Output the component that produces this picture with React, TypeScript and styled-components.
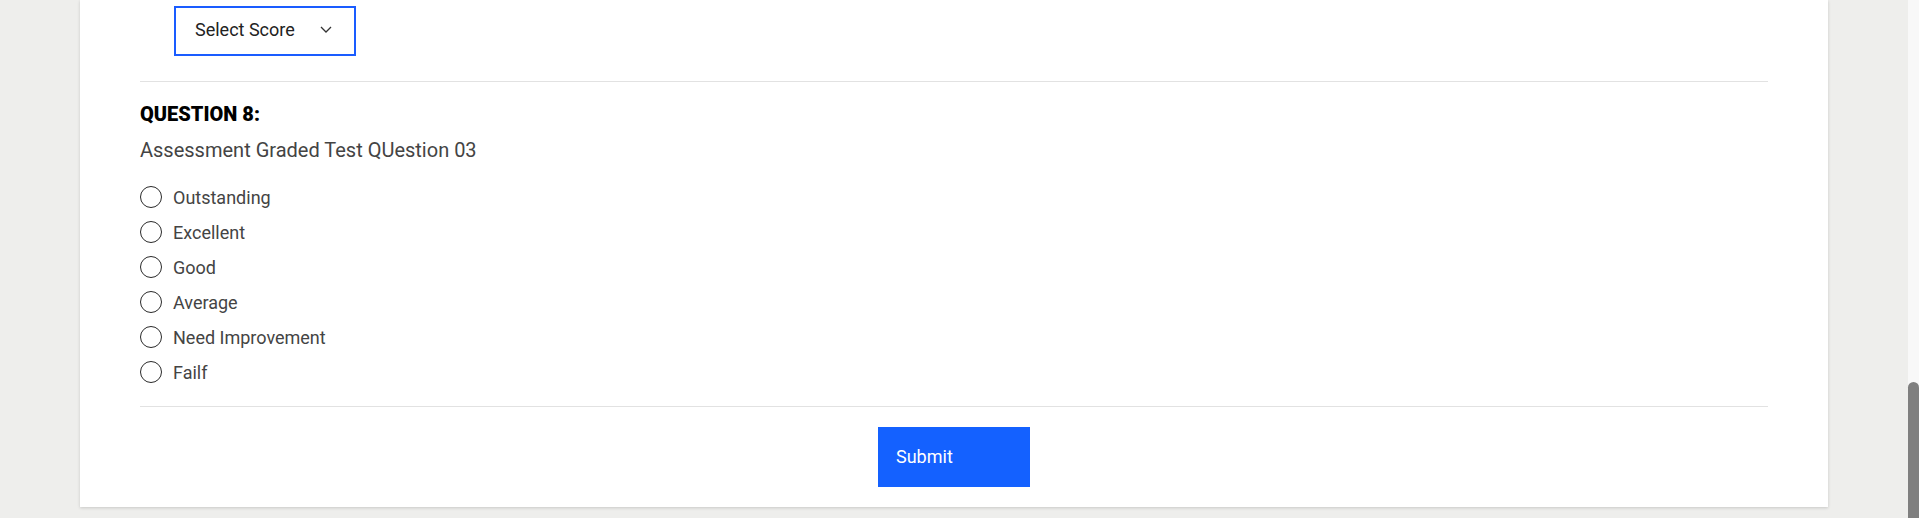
import React from 'react'
import styled, { createGlobalStyle } from 'styled-components'

const GlobalStyle = createGlobalStyle`
  html, body {
    margin: 0;
    padding: 0;
    height: 100%;
    overflow: hidden;
    background: #eeeeec;
    font-family: Roboto, 'Liberation Sans', Arial, sans-serif;
  }
  #root {
    height: 100%;
  }
`

const Page = styled.div`
  display: flex;
  height: 100vh;
`

const Main = styled.main`
  flex: 1;
  padding: 0 80px;
`

const Card = styled.section`
  background: #fff;
  padding: 6px 60px 20px;
  box-shadow: 0 1px 3px rgba(0, 0, 0, 0.16);
`

const ScoreSelect = styled.button`
  display: flex;
  align-items: center;
  justify-content: space-between;
  box-sizing: border-box;
  width: 182px;
  height: 50px;
  margin-left: 34px;
  padding: 0 22px 3px 19px;
  background: #fff;
  border: 2px solid #1a5cff;
  font-family: inherit;
  font-size: 18px;
  color: #222;
  cursor: pointer;
`

const Divider = styled.hr<{ $top: number; $bottom: number }>`
  border: 0;
  border-top: 1px solid #e2e2e2;
  margin: ${(p) => p.$top}px 0 ${(p) => p.$bottom}px;
`

const QuestionTitle = styled.h3`
  margin: 0;
  font-size: 20px;
  font-weight: 900;
  color: #000;
  line-height: 23px;
`

const QuestionText = styled.p`
  margin: 13px 0 0;
  font-size: 20px;
  line-height: 23px;
  color: #444;
`

const Options = styled.div`
  display: flex;
  flex-direction: column;
  gap: 13px;
  margin-top: 24px;
`

const Option = styled.label`
  display: flex;
  align-items: center;
  gap: 11px;
  height: 22px;
  font-size: 18px;
  color: #444;
  cursor: pointer;
`

const Radio = styled.input.attrs({ type: 'radio' })`
  appearance: none;
  box-sizing: border-box;
  width: 22px;
  height: 22px;
  margin: 0;
  border: 1.5px solid #2a2a2a;
  border-radius: 50%;
  background: #fff;
`

const Actions = styled.div`
  display: flex;
  justify-content: center;
`

const SubmitButton = styled.button`
  width: 152px;
  height: 60px;
  padding: 0 18px 2px;
  border: 0;
  background: #1461ff;
  color: #fff;
  font-family: inherit;
  font-size: 18px;
  text-align: left;
  cursor: pointer;
`

const ScrollTrack = styled.div`
  display: flex;
  flex-direction: column;
  justify-content: flex-end;
  width: 11px;
  background: #f8f8f8;
`

const ScrollThumb = styled.div`
  height: 136px;
  background: #7f7f7f;
  border-radius: 6px 6px 0 0;
`

const Chevron = () => (
  <svg width="12" height="7" viewBox="0 0 12 7" fill="none">
    <path d="M1 1l5 5 5-5" stroke="#333" strokeWidth="1.3" />
  </svg>
)

const options = [
  'Outstanding',
  'Excellent',
  'Good',
  'Average',
  'Need Improvement',
  'Failf',
]

export default function App() {
  return (
    <>
      <GlobalStyle />
      <Page>
        <Main>
          <Card>
            <ScoreSelect type="button">
              <span>Select Score</span>
              <Chevron />
            </ScoreSelect>
            <Divider $top={25} $bottom={21} />
            <QuestionTitle>QUESTION 8:</QuestionTitle>
            <QuestionText>Assessment Graded Test QUestion 03</QuestionText>
            <Options>
              {options.map((o) => (
                <Option key={o}>
                  <Radio name="q8" />
                  {o}
                </Option>
              ))}
            </Options>
            <Divider $top={23} $bottom={20} />
            <Actions>
              <SubmitButton type="button">Submit</SubmitButton>
            </Actions>
          </Card>
        </Main>
        <ScrollTrack>
          <ScrollThumb />
        </ScrollTrack>
      </Page>
    </>
  )
}
